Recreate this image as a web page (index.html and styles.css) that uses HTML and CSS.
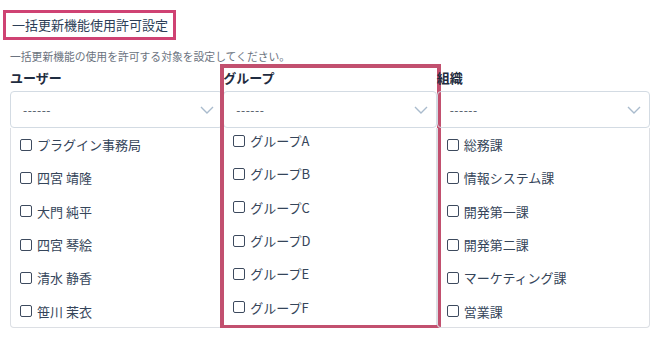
FILE: index.html
```html
<!DOCTYPE html>
<html lang="ja">

<head>
  <meta charset="UTF-8" />
  <title>一括更新機能使用許可設定</title>
  <link rel="stylesheet" href="styles.css">
</head>

<body>
  <div id="settings">
    <h1 class="title">一括更新機能使用許可設定</h1>
    <p class="note">一括更新機能の使用を許可する対象を設定してください。</p>

    <div class="columns">
      <div class="column">
        <h2>ユーザー</h2>
        <div class="select"><span>------</span>
          <svg viewBox="0 0 14 8" width="14" height="8"><path d="M1 1l6 6 6-6" /></svg>
        </div>
        <ul class="list">
          <li><span class="box"></span>プラグイン事務局</li>
          <li><span class="box"></span>四宮 靖隆</li>
          <li><span class="box"></span>大門 純平</li>
          <li><span class="box"></span>四宮 琴絵</li>
          <li><span class="box"></span>清水 静香</li>
          <li><span class="box"></span>笹川 茉衣</li>
        </ul>
      </div>

      <div class="column marked">
        <h2>グループ</h2>
        <div class="select"><span>------</span>
          <svg viewBox="0 0 14 8" width="14" height="8"><path d="M1 1l6 6 6-6" /></svg>
        </div>
        <ul class="list scrolled">
          <li><span class="box"></span>グループA</li>
          <li><span class="box"></span>グループB</li>
          <li><span class="box"></span>グループC</li>
          <li><span class="box"></span>グループD</li>
          <li><span class="box"></span>グループE</li>
          <li><span class="box"></span>グループF</li>
        </ul>
      </div>

      <div class="column">
        <h2>組織</h2>
        <div class="select"><span>------</span>
          <svg viewBox="0 0 14 8" width="14" height="8"><path d="M1 1l6 6 6-6" /></svg>
        </div>
        <ul class="list">
          <li><span class="box"></span>総務課</li>
          <li><span class="box"></span>情報システム課</li>
          <li><span class="box"></span>開発第一課</li>
          <li><span class="box"></span>開発第二課</li>
          <li><span class="box"></span>マーケティング課</li>
          <li><span class="box"></span>営業課</li>
        </ul>
      </div>
    </div>
  </div>
</body>

</html>
```

FILE: styles.css
```css
body,
html {
  margin: 0;
  background-color: white;
}

body {
  font-family: "Noto Sans CJK JP", "Noto Sans", sans-serif;
  color: #2e3d50;
}

#settings {
  padding: 10px 20px 0 10px;
}

/* pink annotation frame round the title */
.title {
  display: inline-block;
  margin: 0 0 0 -7px;
  padding: 3px 5px 3px 6px;
  border: 3px solid #cf4273;
  font-size: 13px;
  font-weight: normal;
  line-height: 18px;
  color: #2c3e57;
}

.note {
  margin: 9px 0 0 0;
  font-size: 10.8px;
  line-height: 14px;
  color: #6b7380;
}

.columns {
  display: grid;
  grid-template-columns: 1fr 1fr 1fr;
  margin-top: 2px;
}

.column {
  position: relative;
}

.column h2 {
  margin: 0;
  padding-top: 4px;
  font-size: 13px;
  line-height: 18px;
  height: 18px;
  color: #1f2c40;
}

.select {
  display: flex;
  justify-content: space-between;
  align-items: center;
  height: 35px;
  margin-top: 4px;
  padding: 0 8px 0 12px;
  border: 1px solid #d3dbe3;
  border-radius: 4px;
  font-size: 12px;
  letter-spacing: 0.5px;
  color: #4b5563;
}

.select svg path {
  fill: none;
  stroke: #a9bbcd;
  stroke-width: 1.4;
}

.list {
  list-style: none;
  margin: 0;
  padding: 0;
  height: 199px;
  border: 1px solid #dcdfe4;
  border-top: none;
  border-radius: 0 0 4px 4px;
  overflow: hidden;
}

.list li {
  display: flex;
  align-items: center;
  height: 33.3px;
  padding-left: 9px;
  font-size: 13px;
  color: #35455a;
}

.scrolled li:first-child {
  margin-top: -4px;
}

.box {
  width: 10px;
  height: 10px;
  margin-right: 5px;
  border: 1.5px solid #3d4a5e;
  border-radius: 2px;
}

/* pink annotation frame round the group column */
.marked::after {
  content: "";
  position: absolute;
  top: -1px;
  left: -3px;
  right: -4px;
  bottom: -1px;
  border: 4px solid #c2506f;
}
```
